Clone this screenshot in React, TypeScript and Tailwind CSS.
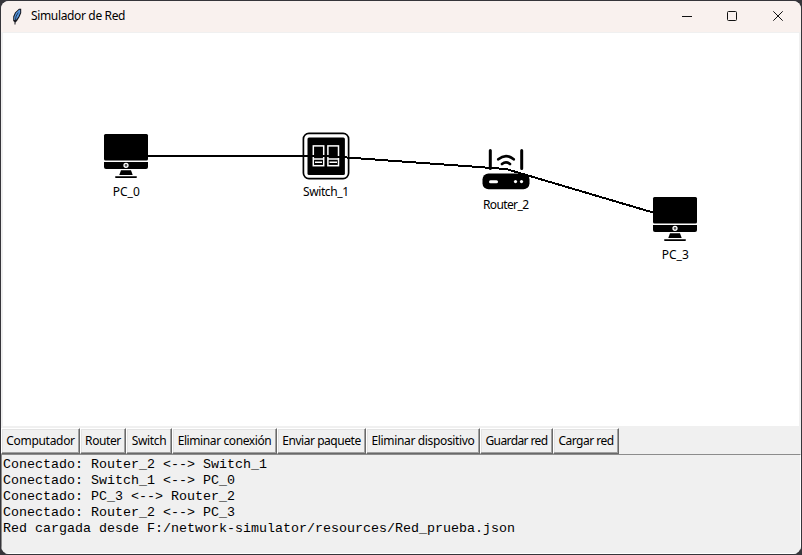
import React from "react";

const ui = "font-['Noto_Sans','Open_Sans',sans-serif]";

type Action = { label: string; width: string; spacing: string };

const actions: Action[] = [
  { label: "Computador", width: "w-[79px]", spacing: "tracking-[-0.3px]" },
  { label: "Router", width: "w-[46px]", spacing: "tracking-[-0.4px]" },
  { label: "Switch", width: "w-[46px]", spacing: "tracking-[-0.35px]" },
  { label: "Eliminar conexión", width: "w-[105px]", spacing: "tracking-[-0.4px]" },
  { label: "Enviar paquete", width: "w-[89px]", spacing: "tracking-[-0.45px]" },
  { label: "Eliminar dispositivo", width: "w-[114px]", spacing: "tracking-[-0.35px]" },
  { label: "Guardar red", width: "w-[73px]", spacing: "tracking-[-0.6px]" },
  { label: "Cargar red", width: "w-[66px]", spacing: "tracking-[-0.5px]" },
];

const log = [
  "Conectado: Router_2 <--> Switch_1",
  "Conectado: Switch_1 <--> PC_0",
  "Conectado: PC_3 <--> Router_2",
  "Conectado: Router_2 <--> PC_3",
  "Red cargada desde F:/network-simulator/resources/Red_prueba.json",
];

function Feather() {
  return (
    <svg width="12" height="18" viewBox="0 0 12 18" className="block">
      <path d="M8 0.8H10.2V5L8.5 9L6 13L4.5 14.5V16.5H3.5V14L2.2 13V8.5L4 4.5Z" fill="#17171c" />
      <path d="M8.2 1.8H9.2V4.5L7.5 8.5L5 12H3.2V9L5 4.8Z" fill="#5596e0" />
      <path d="M7.3 4.5L5.2 8L4 13.5" stroke="#16202e" strokeWidth="0.8" fill="none" />
    </svg>
  );
}

function Pc() {
  return (
    <g>
      <rect x="0" y="0" width="44" height="26.5" rx="1.5" />
      <path d="M0 28H44V33Q44 35 42 35H2Q0 35 0 33Z" />
      <circle cx="22" cy="31.3" r="2" fill="#555" stroke="#fff" strokeWidth="1.3" />
      <path d="M17 36.3H27L28.7 41H15.3Z" />
      <rect x="11" y="42.2" width="22" height="1.7" rx="0.8" />
    </g>
  );
}

function Switch() {
  return (
    <g>
      <rect x="0.9" y="0.9" width="45.2" height="45.2" rx="5.5" fill="#fff" stroke="#000" strokeWidth="1.7" />
      <rect x="5" y="5" width="37.4" height="37.4" rx="1.5" />
      <g fill="none" stroke="#fff" strokeWidth="1.5">
        <rect x="10.8" y="13.4" width="10.4" height="19.8" />
        <rect x="25.4" y="13.4" width="10.6" height="19.8" />
        <path d="M11 26.4H21M25.5 26.4H36M12.5 29.8H19.5M27 29.8H34.5" />
      </g>
    </g>
  );
}

function Router() {
  return (
    <g>
      <rect x="0" y="25.5" width="47" height="15.8" rx="6" />
      <path d="M7.8 2.5V20.5M39.2 2.5V20.5" stroke="#000" strokeWidth="3" strokeLinecap="round" />
      <path d="M15.8 11.3Q23.5 4.8 31.2 11.3M19.5 16Q23.5 12.7 27.5 16" fill="none" stroke="#000" strokeWidth="2.7" strokeLinecap="round" />
      <path d="M8 33.7H14" stroke="#fff" strokeWidth="3" strokeLinecap="round" />
      <circle cx="33" cy="33.6" r="1.6" fill="#fff" />
      <circle cx="39" cy="33.6" r="1.6" fill="#fff" />
    </g>
  );
}

function Network() {
  return (
    <svg width="797" height="394" viewBox="3 33 797 394" className="block">
      <g transform="translate(104 134)"><Pc /></g>
      <g transform="translate(302.5 132.5)"><Switch /></g>
      <g transform="translate(482.5 148)"><Router /></g>
      <g transform="translate(653 197)"><Pc /></g>
      <path d="M126 156H326L506 169L675 219" fill="none" stroke="#000" strokeWidth="2" shapeRendering="crispEdges" />
      <g className={ui} fontSize="12" textAnchor="middle" fill="#000">
        <text x="126.3" y="196" textLength="27">PC_0</text>
        <text x="326" y="196" textLength="46">Switch_1</text>
        <text x="506" y="209" textLength="46">Router_2</text>
        <text x="675.3" y="259" textLength="27">PC_3</text>
      </g>
    </svg>
  );
}

export default function App() {
  return (
    <div className="h-[555px] w-[802px] overflow-hidden bg-[#36353a] p-px text-black">
      <div className="flex h-[553px] w-[800px] flex-col overflow-hidden rounded-[8px] bg-[#f0f0f0]">
        <header className="flex h-[31px] shrink-0 items-center bg-[#f9f1ee] pl-[10px]">
          <Feather />
          <h1 className={`${ui} ml-[8px] pb-[2px] text-[12px] leading-[16px] tracking-[-0.35px]`}>Simulador de Red</h1>
          <svg width="120" height="30" viewBox="675 1 120 30" className="ml-auto mr-[6px] block" fill="none" stroke="#111" strokeWidth="1">
            <path d="M682 15.5H692" />
            <rect x="727.5" y="10.5" width="9" height="9" rx="1" />
            <path d="M773.3 10.3L782.7 19.7M782.7 10.3L773.3 19.7" />
          </svg>
        </header>
        <main className="mt-[1px] ml-[2px] h-[393px] w-[796px] shrink-0 overflow-hidden bg-white">
          <Network />
        </main>
        <nav className="mt-[1px] flex h-[27px] shrink-0 pt-px">
          {actions.map((a) => (
            <button
              key={a.label}
              className={`${ui} ${a.width} ${a.spacing} h-[26px] shrink-0 border border-t-white border-l-white border-r-[#696969] border-b-[#696969] text-[12px] leading-[22px] whitespace-nowrap shadow-[inset_-1px_-1px_0_#a0a0a0,inset_1px_1px_0_#e3e3e3]`}
            >
              {a.label}
            </button>
          ))}
        </nav>
        <section className="flex-1 border border-t-[#8c8c8c] border-r-white border-b-white border-l-[#8c8c8c] pl-px pt-[2px] font-['Liberation_Mono','Courier_New',monospace] text-[13.333px] leading-[16px]">
          {log.map((line) => (
            <p key={line} className="whitespace-pre">{line}</p>
          ))}
        </section>
      </div>
    </div>
  );
}
